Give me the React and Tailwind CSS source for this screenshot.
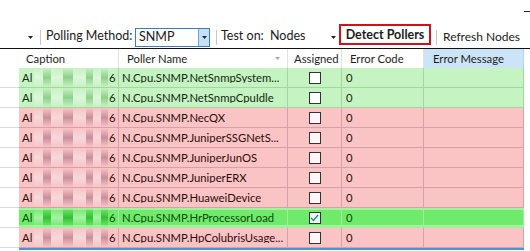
import React from "react";

const F = { fontFamily: 'Lato, "Noto Sans", sans-serif' };

const rows = [
  { n: "N.Cpu.SNMP.NetSnmpSystem...", t: "g" },
  { n: "N.Cpu.SNMP.NetSnmpCpuIdle", t: "g" },
  { n: "N.Cpu.SNMP.NecQX", t: "p" },
  { n: "N.Cpu.SNMP.JuniperSSGNetS...", t: "p" },
  { n: "N.Cpu.SNMP.JuniperJunOS", t: "p" },
  { n: "N.Cpu.SNMP.JuniperERX", t: "p" },
  { n: "N.Cpu.SNMP.HuaweiDevice", t: "p" },
  { n: "N.Cpu.SNMP.HrProcessorLoad", t: "s", c: true },
  { n: "N.Cpu.SNMP.HpColubrisUsage...", t: "p" },
];

const S = {
  g: {
    cell: "bg-[#c6f3c2] border-[#a2d8a0] text-[#0f2a0f]",
    light: "via-[#dcf7d9]",
    dark: "via-[#8fd08d]",
    box: "bg-white",
  },
  p: {
    cell: "bg-[#fac4c5] border-[#d8a0ac] text-[#2e0b0b]",
    light: "via-[#f5d8dc]",
    dark: "via-[#c98f9c]",
    box: "bg-[#fff4f8]",
  },
  s: {
    cell: "bg-[#70ea6b] border-[#9ff09a] text-[#0b4a0b] shadow-[inset_0_2px_0_#a4f29f,inset_0_-2px_0_#a4f29f]",
    light: "via-[#a6f2a2]",
    dark: "via-[#36c036]",
    box: "bg-[#e8faf0]",
  },
};

function Tri({ cls = "fill-[#222]" }) {
  return (
    <svg width="5" height="3" viewBox="0 0 5 3" className={cls}>
      <path d="M0 0h5L2.5 3z" />
    </svg>
  );
}

function Sep() {
  return <div className="w-px h-[15px] bg-[#c8c8c8] shrink-0 mt-[6px]" />;
}

function Blur({ s }) {
  const segs = [
    [9, "l"],
    [8, "d"],
    [12, "l"],
    [10, "d"],
    [13, "l"],
    [7, "d"],
    [8, "l"],
    [7, "d"],
  ];
  return (
    <div className="flex h-full w-[74px] shrink-0">
      {segs.map(([w, k], i) => (
        <div
          key={i}
          style={{ width: w }}
          className={
            "h-full bg-linear-to-b from-transparent to-transparent " +
            (k === "l" ? s.light : s.dark)
          }
        />
      ))}
    </div>
  );
}

function Row({ r }) {
  const s = S[r.t];
  const c = "h-full border-r border-b shrink-0 flex items-center " + s.cell;
  return (
    <div className="flex h-[20px]">
      <div className="w-[19px] h-full bg-white border-b border-[#dadada] shrink-0" />
      <div className={c + " w-[100px] pl-[3px]"}>
        <span className="w-[12px] shrink-0 whitespace-nowrap">Al</span>
        <Blur s={s} />
        <span className="pl-[1px]">6</span>
      </div>
      <div className={c + " w-[169px] pl-[3px] whitespace-nowrap"}>
        <span className="block overflow-hidden text-ellipsis">{r.n}</span>
      </div>
      <div className={c + " w-[54px] justify-center"}>
        <div className={"w-[12px] h-[12px] border border-[#333] flex items-center justify-center " + s.box}>
          {r.c && (
            <svg width="9" height="8" viewBox="0 0 9 8">
              <path d="M1 4l2.5 2.5L8 1" fill="none" stroke="#2d7f86" strokeWidth="1.3" />
            </svg>
          )}
        </div>
      </div>
      <div className={c + " w-[82px] pl-[4px]"}>0</div>
      <div className={c + " w-[100px]"} />
    </div>
  );
}

export default function App() {
  return (
    <div className="w-[530px] h-[251px] bg-white overflow-hidden text-[12.5px] text-[#1b1b1b] leading-none" style={F}>
      {/* top strip */}
      <div className="h-[24px] flex justify-end">
        <div className="w-[6px] h-px bg-[#222] mt-[11px]" />
      </div>
      {/* toolbar */}
      <div className="h-[24px] flex items-start">
        <div className="w-[28px] shrink-0" />
        <div className="w-[6px] shrink-0 mt-[12px]">
          <Tri />
        </div>
        <div className="w-[6px] shrink-0" />
        <Sep />
        <div className="w-[5px] shrink-0" />
        <div className="w-[89px] shrink-0 h-[24px] flex items-center pt-[1px] whitespace-nowrap">Polling Method:</div>
        <div className="w-[75px] h-[19px] mt-[4px] border border-[#3b7fba] flex shrink-0 bg-white">
          <div className="flex-1 flex items-center pl-[3px]">SNMP</div>
          <div className="w-[11px] h-full bg-[#c5e0f6] border-l border-[#6aa6d6] flex items-center justify-center">
            <Tri cls="fill-[#1a2a3a]" />
          </div>
        </div>
        <div className="w-[6px] shrink-0" />
        <Sep />
        <div className="w-[4px] shrink-0" />
        <div className="w-[49px] shrink-0 h-[24px] flex items-center pt-[1px] whitespace-nowrap">Test on:</div>
        <div className="w-[61px] shrink-0 h-[24px] flex items-center pt-[1px] whitespace-nowrap">Nodes</div>
        <div className="w-[5px] shrink-0 mt-[12px]">
          <Tri />
        </div>
        <div className="w-[3px] shrink-0" />
        <div className="w-[92px] h-[21px] shrink-0 border-2 border-[#d2101c] flex items-center justify-center pt-[1px] font-bold whitespace-nowrap">
          Detect Pollers
        </div>
        <div className="w-[5px] shrink-0" />
        <Sep />
        <div className="w-[6px] shrink-0" />
        <div className="h-[24px] flex items-center pt-[1px] whitespace-nowrap text-[12px]">Refresh Nodes</div>
      </div>
      <div className="h-px bg-[#111]" />
      {/* header */}
      <div className="flex h-[19px] text-[#1e1e1e] text-[11.3px]">
        <div className="w-[19px] shrink-0" />
        <div className="w-[100px] shrink-0 border-r border-[#e2e2e2] flex items-center pl-[7px]">Caption</div>
        <div className="w-[169px] shrink-0 border-r border-[#e2e2e2] flex items-center pl-[8px] justify-between pr-[7px]">
          <span>Poller Name</span>
          <Tri cls="fill-[#a8a8a8]" />
        </div>
        <div className="w-[54px] shrink-0 border-r border-[#e2e2e2] flex items-center pl-[6px]">Assigned</div>
        <div className="w-[82px] shrink-0 border-r border-[#e2e2e2] flex items-center pl-[8px]">Error Code</div>
        <div className="w-[100px] shrink-0 bg-[#cce4f7] border-r border-[#b4d3ee] flex items-center pl-[9px]">Error Message</div>
      </div>
      <div className="text-[11.3px]">
        {rows.map((r, i) => (
          <Row key={i} r={r} />
        ))}
      </div>
      <div className="flex h-[2px]">
        <div className="w-[19px] shrink-0 bg-white" />
        <div className="w-[505px] shrink-0 bg-[#3e9bd0]" />
      </div>
    </div>
  );
}
